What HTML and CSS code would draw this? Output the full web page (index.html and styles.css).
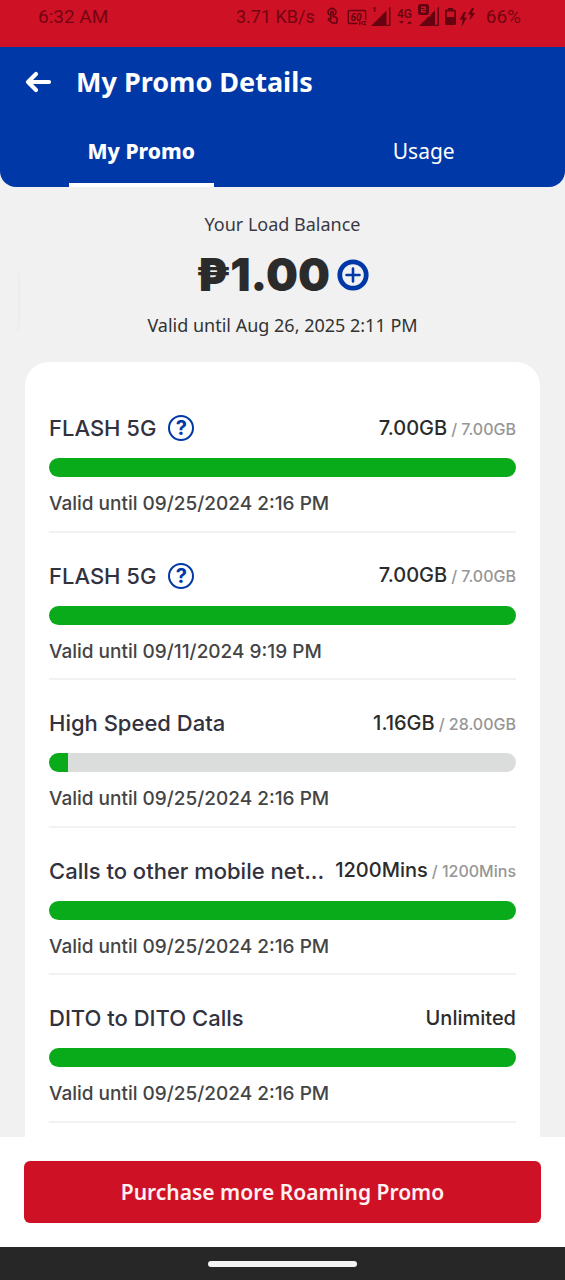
FILE: index.html
```html
<!DOCTYPE html>
<html lang="en">
<head>
<meta charset="utf-8">
<meta name="viewport" content="width=device-width, initial-scale=1">
<title>My Promo Details</title>
<link rel="stylesheet" href="styles.css">
</head>
<body>
<div class="status">
  <span class="clock">6:32 AM</span>
  <div class="status-right">
    <span class="speed">3.71 KB/s</span>
    <svg class="status-icons" width="150" height="28" viewBox="0 0 150 28" aria-hidden="true">
      <g fill="none" stroke="currentColor" stroke-width="1.600" stroke-linecap="round" stroke-linejoin="round">
        <path d="M4 14.600a3.800 3.800 0 1 1 6 0"/>
        <path d="M5.800 19v-6.800q1.200-1.400 2.400 0v4.300l3 .9q1.300.5 1 1.900L11.700 23H7.200l-3.900-3.700q1-1.200 2.500-.3z"/>
        <path d="M32 23.500h-7.500q-1.200 0-1.200-1.200V11.700q0-1.200 1.200-1.200h15q1.200 0 1.200 1.200V19" stroke-width="1.300"/>
        <path d="M34.500 21.500v3m0-1.500H37m0-1.500v3m1.500-3h2.300l-2.300 3h2.300" stroke-width="1"/>
      </g>
      <g fill="currentColor">
        <text class="hz" x="25.500" y="20.500">60</text>
        <text class="sim" x="47" y="12">1</text>
        <path d="M46 26 61.500 10.500V26zM63 9l2.500-2.500V26H60v-1.200h4V8.500z"/>
        <text class="network" x="72" y="18">4G</text>
        <path d="M74 21h5l-2.500 2.800zM82 23.800h5L84.500 21z"/>
        <path fill-rule="evenodd" d="M95.500 4h6Q104 4 104 6.500v6q0 2.500-2.500 2.500h-6Q93 15 93 12.500v-6Q93 4 95.500 4zm.5 2.500V8h3.500v1H96v3.500h5V11h-3.500v-1h3.500V6.500z"/>
        <path d="m94 26 9.500-9.500h2V14.500l4.500-4V26zM111.500 9l2.500-2.500V26h-5.500v-1.200h4V8.500z"/>
        <path fill-rule="evenodd" d="M123 8h5v1.500h1.500q1.500 0 1.500 1.500v12.500q0 1.500-1.500 1.500h-8q-1.500 0-1.500-1.500V11q0-1.500 1.500-1.500h1.500zm-1.200 3.500v5.500h7.400v-5.500z"/>
        <path d="m139 12-4.500 7.500h3.200L136.500 27l5.500-9.500h-3.200L141 12zM147 8l-4 6.500h2.800l-1.200 6L150 13h-2.800l1.800-5z"/>
      </g>
    </svg>
    <span class="battery">66%</span>
  </div>
</div>

<header class="header">
  <div class="title-row">
    <button class="back" type="button" aria-label="Back">
      <svg width="28" height="24" viewBox="0 0 28 24" fill="none" stroke="currentColor" stroke-width="4.200" stroke-linecap="round" stroke-linejoin="round" aria-hidden="true"><path d="M12 4 4 12l8 8M4.500 12H25"/></svg>
    </button>
    <h1 class="title">My Promo Details</h1>
  </div>
  <nav class="tabs">
    <button class="tab tab-active" type="button"><span>My Promo</span></button>
    <button class="tab" type="button"><span>Usage</span></button>
  </nav>
</header>

<main class="main">
  <div class="edge-handle"></div>
  <section class="balance">
    <p class="balance-label">Your Load Balance</p>
    <div class="amount-row">
      <strong class="amount">₱1.00</strong>
      <button class="add" type="button" aria-label="Add load">
        <svg width="32" height="32" viewBox="0 0 32 32" fill="none" stroke="currentColor" aria-hidden="true"><circle cx="16" cy="16" r="13.200" stroke-width="4.800"/><path d="M16 9.500v13M9.500 16h13" stroke-width="2.600" stroke-linecap="round"/></svg>
      </button>
    </div>
    <p class="balance-valid">Valid until Aug 26, 2025 2:11 PM</p>
  </section>

  <section class="card">
    <article class="item">
      <div class="item-head">
        <h2 class="name">FLASH 5G</h2>
        <button class="help" type="button" aria-label="About FLASH 5G">?</button>
        <p class="quota">7.00GB<small>/ 7.00GB</small></p>
      </div>
      <div class="bar"><div class="fill" style="width:100%"></div></div>
      <p class="valid">Valid until 09/25/2024 2:16 PM</p>
    </article>
    <article class="item">
      <div class="item-head">
        <h2 class="name">FLASH 5G</h2>
        <button class="help" type="button" aria-label="About FLASH 5G">?</button>
        <p class="quota">7.00GB<small>/ 7.00GB</small></p>
      </div>
      <div class="bar"><div class="fill" style="width:100%"></div></div>
      <p class="valid">Valid until 09/11/2024 9:19 PM</p>
    </article>
    <article class="item">
      <div class="item-head">
        <h2 class="name">High Speed Data</h2>
        <p class="quota">1.16GB<small>/ 28.00GB</small></p>
      </div>
      <div class="bar"><div class="fill" style="width:4.1%"></div></div>
      <p class="valid">Valid until 09/25/2024 2:16 PM</p>
    </article>
    <article class="item">
      <div class="item-head">
        <h2 class="name">Calls to other mobile net...</h2>
        <p class="quota">1200Mins<small>/ 1200Mins</small></p>
      </div>
      <div class="bar"><div class="fill" style="width:100%"></div></div>
      <p class="valid">Valid until 09/25/2024 2:16 PM</p>
    </article>
    <article class="item">
      <div class="item-head">
        <h2 class="name">DITO to DITO Calls</h2>
        <p class="quota">Unlimited</p>
      </div>
      <div class="bar"><div class="fill" style="width:100%"></div></div>
      <p class="valid">Valid until 09/25/2024 2:16 PM</p>
    </article>
  </section>
</main>

<footer class="actions">
  <button class="purchase" type="button">Purchase more Roaming Promo</button>
</footer>
<div class="system-nav"><div class="pill"></div></div>
</body>
</html>
```

FILE: styles.css
```css
* { box-sizing: border-box; }

body {
  margin: 0;
  min-height: 100vh;
  display: flex;
  flex-direction: column;
  background: #f1f1f1;
  color: #2b2b2b;
  font-family: Inter, sans-serif;
}

h1, h2, p { margin: 0; }

button {
  border: 0;
  padding: 0;
  background: none;
  color: inherit;
  font: inherit;
  cursor: pointer;
}

svg { display: block; }

.status {
  display: flex;
  justify-content: space-between;
  height: 47px;
  padding: 0 44px 0 38px;
  background: #cf1126;
  color: #730411;
  font: 400 19px/34px Roboto, sans-serif;
}

.status-right { display: flex; }
.speed { font-size: 18px; }
.status-icons { margin: 0 11px 0 10px; color: #650410; }
.hz { font: italic 700 10px Roboto, sans-serif; }
.sim { font: 700 8px Roboto, sans-serif; }
.network { font: 500 12px Roboto, sans-serif; }

.header {
  background: #0038a8;
  color: #fff;
  border-radius: 0 0 16px 16px;
  font-family: "Noto Sans", sans-serif;
}

.title-row {
  display: flex;
  align-items: center;
  gap: 24px;
  height: 70px;
  padding: 0 24px;
}

.title { font-size: 27px; line-height: 36px; font-weight: 700; }

.tabs { display: grid; grid-template-columns: 1fr 1fr; }

.tab {
  display: flex;
  justify-content: center;
  height: 70px;
  font-size: 21px;
  line-height: 68px;
}

.tab-active span {
  height: 70px;
  padding: 0 19px;
  border-bottom: 4px solid #fff;
  font-weight: 800;
}

.main {
  flex: 1;
  display: flex;
  flex-direction: column;
  position: relative;
  padding: 0 25px;
}

.edge-handle {
  position: absolute;
  left: 0;
  top: 78px;
  width: 20px;
  height: 72px;
  border-right: 2px solid #ededed;
  border-radius: 0 14px 14px 0;
}

.balance {
  padding: 25px 0;
  text-align: center;
  font-family: "Noto Sans", sans-serif;
}

.balance-label, .balance-valid { font-size: 18px; line-height: 24px; color: #393944; }
.balance-valid { color: #333; }

.amount-row {
  display: flex;
  align-items: center;
  justify-content: center;
  gap: 7px;
  height: 77px;
}

.amount { font: 900 45px/56px Inter, sans-serif; }
.add { color: #0038a8; }

.card {
  flex: 1;
  display: flex;
  flex-direction: column;
  padding: 23px 24px 14px;
  border-radius: 24px 24px 0 0;
  background: #fff;
}

.item { flex: 1 0 auto; padding: 28px 0 13px; border-bottom: 2px solid #f2f2f2; }

.item-head { display: flex; align-items: center; height: 30px; }

.name {
  color: #32323f;
  font-size: 22px;
  line-height: 30px;
  font-weight: 500;
  white-space: nowrap;
}

.help {
  width: 26px;
  height: 26px;
  margin-left: 12px;
  border: 2px solid #0038a8;
  border-radius: 50%;
  color: #0038a8;
  font-size: 20px;
  line-height: 22px;
  font-weight: 700;
}

.quota {
  margin-left: auto;
  font-size: 20px;
  line-height: 30px;
  font-weight: 500;
  white-space: nowrap;
}

.quota small { margin-left: 4px; color: #969696; font-size: 16px; }

.bar {
  height: 19px;
  margin-top: 15px;
  border-radius: 10px;
  overflow: hidden;
  background: #dbdddc;
}

.fill { height: 100%; background: #0aab1a; }

.valid {
  margin-top: 15px;
  color: #444;
  font-size: 19px;
  line-height: 24px;
  font-weight: 500;
}

.actions { padding: 24px; background: #fff; }

.purchase {
  width: 100%;
  height: 62px;
  border-radius: 6px;
  background: #cf1126;
  color: #fff0f2;
  font: 600 21px/30px "Noto Sans", sans-serif;
}

.system-nav {
  display: flex;
  justify-content: center;
  height: 33px;
  padding-top: 14px;
  background: #272727;
}

.pill { width: 149px; height: 6px; border-radius: 3px; background: #f3f3f3; }
```
